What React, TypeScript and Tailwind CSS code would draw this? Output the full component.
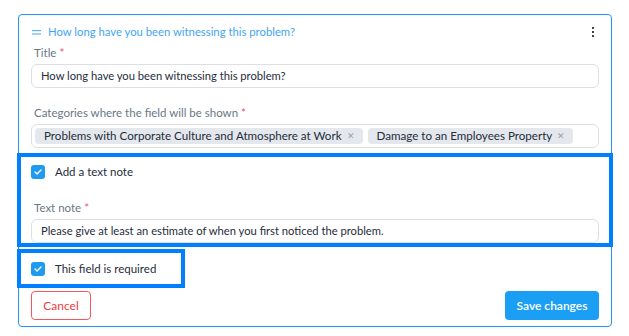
function Check() {
  return (
    <span className="flex h-[14px] w-[14px] items-center justify-center rounded-[3px] bg-[#1e9bf0]">
      <svg width="8" height="6" viewBox="0 0 8 6" fill="none">
        <path d="M1 3l2 2 4-4" stroke="white" strokeWidth="1.4" strokeLinecap="round" strokeLinejoin="round" />
      </svg>
    </span>
  );
}

function Label({ text }: { text: string }) {
  return (
    <div className="text-[11.5px] leading-[16px] text-[#6b7785]">
      {text} <span className="text-[#f0506e]">*</span>
    </div>
  );
}

function Tag({ text }: { text: string }) {
  return (
    <span className="flex h-[16px] items-center gap-[5px] whitespace-nowrap rounded-[4px] bg-[#e4e7eb] pl-[9px] pr-[8px] text-[11.6px] text-[#1f2d3d]">
      {text}
      <span className="text-[9px] text-[#9aa3ad]">✕</span>
    </span>
  );
}

export default function App() {
  const tags = ["Problems with Corporate Culture and Atmosphere at Work", "Damage to an Employees Property"];

  return (
    <div className="min-h-screen bg-white pt-[14px] pl-[18px] font-['Lato',sans-serif]">
      <div className="w-[594px] rounded-[4px] border border-[#2196f3] px-[12px] pt-[7px] pb-[6px]">
        {/* header */}
        <div className="flex h-[20px] items-center justify-between">
          <div className="flex items-center gap-[7px] pl-[1px] text-[11.3px] text-[#42a5f5]">
            <svg width="9" height="5" viewBox="0 0 9 5">
              <rect x="0" y="0" width="9" height="1.2" fill="#64b5f6" />
              <rect x="0" y="3.4" width="9" height="1.2" fill="#64b5f6" />
            </svg>
            How long have you been witnessing this problem?
          </div>
          <svg width="4" height="12" viewBox="0 0 4 12" className="mr-[4px]">
            <rect x="1" y="1" width="2" height="2" fill="#37474f" />
            <rect x="1" y="5" width="2" height="2" fill="#37474f" />
            <rect x="1" y="9" width="2" height="2" fill="#37474f" />
          </svg>
        </div>

        <div className="mt-[3px] pl-[3px]">
          <Label text="Title" />
        </div>
        <div className="mt-[3px] flex h-[24px] items-center rounded-[6px] border border-[#dcdfe3] px-[9px] text-[11.2px] text-[#1f2d3d]">
          How long have you been witnessing this problem?
        </div>

        <div className="mt-[17px] pl-[3px]">
          <Label text="Categories where the field will be shown" />
        </div>
        <div className="mt-[3px] flex h-[24px] items-center gap-[5px] rounded-[6px] border border-[#dcdfe3] px-[3px]">
          {tags.map((t) => (
            <Tag key={t} text={t} />
          ))}
        </div>

        {/* text note section */}
        <div className="mx-[-14px] mt-[5px] border-[4px] border-[#0080ff] px-[10px] pt-[8px]">
          <div className="flex h-[14px] items-center gap-[10px] text-[11.5px] text-[#1f2d3d]">
            <Check />
            Add a text note
          </div>
          <div className="mt-[21px] pl-[3px]">
            <Label text="Text note" />
          </div>
          <div className="mt-[3px] flex h-[24px] items-center rounded-[6px] border border-[#dcdfe3] px-[9px] text-[11.2px] text-[#1f2d3d]">
            Please give at least an estimate of when you first noticed the problem.
          </div>
        </div>

        <div className="ml-[-14px] mt-[2px] flex h-[39px] w-[168px] items-center gap-[10px] border-[4px] border-[#0080ff] pl-[10px] text-[11.5px] text-[#1f2d3d]">
          <Check />
          This field is required
        </div>

        <div className="mt-[3px] flex items-center justify-between">
          <button className="h-[29px] w-[60px] rounded-[4px] border border-[#f05a5a] text-[12px] text-[#f03c3c]">
            Cancel
          </button>
          <button className="h-[29px] w-[94px] rounded-[4px] bg-[#1a9ff5] text-[12px] font-semibold text-white">
            Save changes
          </button>
        </div>
      </div>
    </div>
  );
}
